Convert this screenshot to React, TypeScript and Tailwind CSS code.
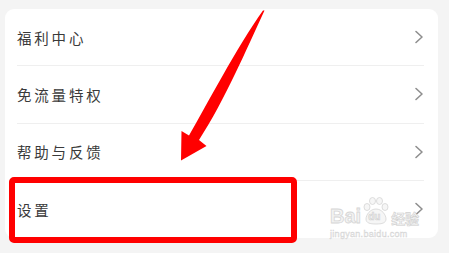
import React from "react";

const items = ["福利中心", "免流量特权", "帮助与反馈", "设置"];

function Chevron() {
  return (
    <svg width="10" height="14" viewBox="0 0 10 14" fill="none">
      <path d="M2 1.5 L8 7 L2 12.5" stroke="#8f8f8f" strokeWidth="1.6" strokeLinecap="round" strokeLinejoin="round" />
    </svg>
  );
}

export default function App() {
  return (
    <div
      className="relative w-[449px] h-[253px] overflow-hidden bg-[#f4f4f4]"
      style={{ fontFamily: '"Noto Sans CJK SC", "Noto Sans", sans-serif' }}
    >
      <div className="pt-[9px] pl-[5px] pr-[11px]">
        <div className="bg-white rounded-[9px] h-[229px] flex flex-col">
          {items.map((t, i) => (
            <div key={t} className="h-[57.25px] flex items-center pl-[12px] pr-[14px]">
              <div
                className={
                  "flex-1 h-full flex items-center justify-between " +
                  (i < items.length - 1 ? "border-b border-[#efefef]" : "")
                }
              >
                <span className="text-[14.5px] tracking-[2.8px] text-[#3a3a3a] leading-none pt-[2px]">{t}</span>
                <Chevron />
              </div>
            </div>
          ))}
        </div>
      </div>

      {/* watermark */}
      <div className="absolute left-[330px] top-[196px] flex flex-col items-start select-none">
        <div className="flex items-end gap-[1px]">
          <span
            className="text-[20px] leading-none font-bold text-[#f3f3f3]"
            style={{ fontFamily: '"Liberation Sans", sans-serif', WebkitTextStroke: "0.8px #d6d6d6" }}
          >
            Bai
          </span>
          <span className="relative w-[28px] h-[30px]">
            <svg width="28" height="30" viewBox="0 0 28 30" className="absolute left-0 top-0">
              <g fill="#f6f6f6" stroke="#d4d4d4" strokeWidth="0.8">
                <ellipse cx="5" cy="11" rx="3" ry="3.5" />
                <ellipse cx="10.5" cy="5" rx="3" ry="3.5" />
                <ellipse cx="17.5" cy="5" rx="3" ry="3.5" />
                <ellipse cx="23" cy="11" rx="3" ry="3.5" />
                <path d="M14 13 C8 13 4 19 4 23 C4 27 8 28 14 28 C20 28 24 27 24 23 C24 19 20 13 14 13 Z" />
              </g>
            </svg>
            <span
              className="absolute left-[6px] top-[16px] text-[10px] leading-none font-bold text-[#f3f3f3]"
              style={{ fontFamily: '"Liberation Sans", sans-serif', WebkitTextStroke: "0.6px #cfcfcf" }}
            >
              du
            </span>
          </span>
          <span
            className="text-[14px] leading-none font-bold text-[#f3f3f3] mb-[1px]"
            style={{ WebkitTextStroke: "0.6px #d0d0d0" }}
          >
            经验
          </span>
        </div>
        <span
          className="text-[9px] leading-none text-[#e8e8e8] mt-[4px] tracking-[0.3px]"
          style={{ fontFamily: '"Liberation Sans", sans-serif', WebkitTextStroke: "0.3px #d0d0d0" }}
        >
          jingyan.baidu.com
        </span>
      </div>

      {/* red highlight box */}
      <div className="absolute left-[9px] top-[177px] w-[288px] h-[66px] border-[6px] border-[#ff0000] rounded-[5px]" />

      {/* red arrow */}
      <svg className="absolute left-0 top-0" width="449" height="253" viewBox="0 0 449 253">
        <path
          d="M264.5 10.5 C247 48 225 100 199 140 L206.5 146 L181 160.5 L181.5 131 L189 135.5 C205 108 238 45 263 10.5 Z"
          fill="#ff0000"
        />
      </svg>
    </div>
  );
}
